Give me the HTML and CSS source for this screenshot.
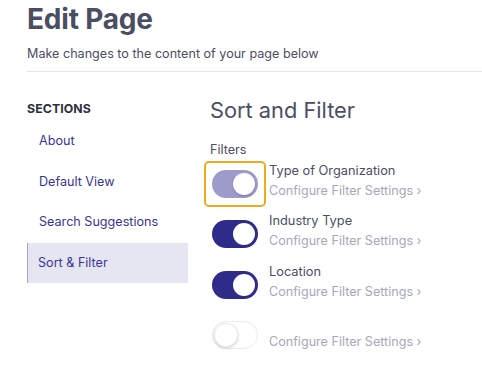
FILE: index.html
```html
<!DOCTYPE html>
<html>
<head>
<meta charset="utf-8">
<link rel="stylesheet" href="styles.css">
</head>
<body>
<div class="page">
  <header class="head">
    <h1 class="title">Edit Page</h1>
    <p class="subtitle">Make changes to the content of your page below</p>
  </header>
  <div class="body">
    <nav class="side">
      <div class="side-label">SECTIONS</div>
      <a class="side-item">About</a>
      <a class="side-item">Default View</a>
      <a class="side-item">Search Suggestions</a>
      <a class="side-item active">Sort &amp; Filter</a>
    </nav>
    <main class="main">
      <h2 class="main-title">Sort and Filter</h2>
      <div class="filters-label">Filters</div>
      <div class="filter">
        <div class="toggle-wrap focus"><span class="toggle on dim"><span class="knob"></span></span></div>
        <div class="filter-text">
          <div class="filter-name">Type of Organization</div>
          <div class="filter-link">Configure Filter Settings ›</div>
        </div>
      </div>
      <div class="filter">
        <div class="toggle-wrap"><span class="toggle on"><span class="knob"></span></span></div>
        <div class="filter-text">
          <div class="filter-name">Industry Type</div>
          <div class="filter-link">Configure Filter Settings ›</div>
        </div>
      </div>
      <div class="filter">
        <div class="toggle-wrap"><span class="toggle on"><span class="knob"></span></span></div>
        <div class="filter-text">
          <div class="filter-name">Location</div>
          <div class="filter-link">Configure Filter Settings ›</div>
        </div>
      </div>
      <div class="filter">
        <div class="toggle-wrap"><span class="toggle off"><span class="knob"></span></span></div>
        <div class="filter-text">
          <div class="filter-name">&nbsp;</div>
          <div class="filter-link">Configure Filter Settings ›</div>
        </div>
      </div>
    </main>
  </div>
</div>
</body>
</html>
```
FILE: styles.css
```css
* { box-sizing: border-box; }
html, body { margin: 0; padding: 0; background: #fff; }
body { font-family: Inter, "Noto Sans", sans-serif; color: #4b4e63; overflow: hidden; }
.page { padding: 0 0 0 27px; }
.head { border-bottom: 1px solid #e4e4ea; padding-bottom: 9px; }
.title { margin: 0; padding-top: 2px; font-size: 28px; line-height: 34px; font-weight: 700; color: #4b4e63; letter-spacing: -0.2px; }
.subtitle { margin: 10px 0 0; font-size: 12.6px; line-height: 16px; color: #4b4e63; }
.body { display: flex; padding-top: 27px; }
.side { width: 161px; flex: none; display: flex; flex-direction: column; padding-top: 2px; }
.side-label { font-size: 12.3px; font-weight: 700; color: #2f2f3d; line-height: 16px; margin-bottom: 4px; letter-spacing: 0.1px; }
.side-item { display: block; height: 40.6px; line-height: 40.6px; padding-left: 11px; font-size: 12.6px; color: #3a3597; border-left: 1px solid transparent; }
.side-item.active { background: #e6e6f2; border-left-color: #a4a2cf; padding-left: 10px; }
.main { padding-left: 22px; flex: 1; }
.main-title { margin: 0; font-size: 21.8px; line-height: 22px; font-weight: 400; color: #4b4e63; }
.filters-label { margin-top: 20px; margin-bottom: 2px; font-size: 12.6px; line-height: 18px; color: #4b4e63; }
.filter { display: flex; align-items: flex-start; height: 50.3px; }
.toggle-wrap { width: 62px; height: 46px; flex: none; display: flex; align-items: center; justify-content: center; border: 2px solid transparent; border-radius: 5px; margin-left: -6px; }
.toggle-wrap.focus { border-color: #f2a91a; }
.toggle { display: block; position: relative; width: 46px; height: 28px; border-radius: 14px; }
.toggle.on { background: #2f2b8a; }
.toggle.on.dim { background: #9d9bc9; }
.toggle.off { background: #fff; border: 1px solid #ececf0; }
.knob { position: absolute; top: 3px; width: 22px; height: 22px; border-radius: 50%; background: #fff; }
.toggle.on .knob { right: 3px; }
.toggle.dim .knob { box-shadow: 0 1px 2px rgba(60,60,110,0.35); }
.toggle.off .knob { left: 1px; top: 1px; width: 24px; height: 24px; box-shadow: 0 1px 3px rgba(0,0,0,0.2); border: 1px solid #ededf2; }
.filter-text { padding-left: 3px; padding-top: 1px; }
.filter-name { font-size: 12.8px; line-height: 18px; color: #4b4e63; }
.filter-link { font-size: 12.6px; line-height: 20px; color: #a6a8b8; margin-top: 1px; }
```
